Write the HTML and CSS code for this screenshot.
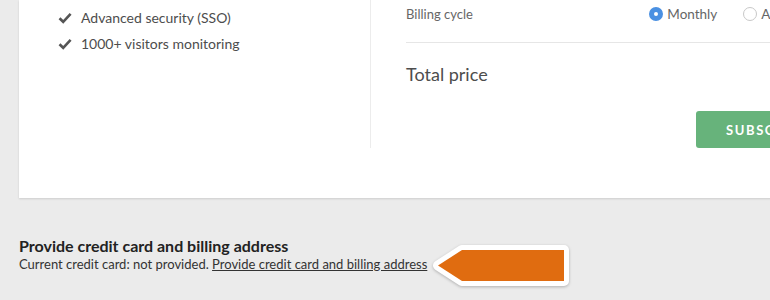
FILE: index.html
```html
<!DOCTYPE html>
<html lang="en">
<head>
    <meta charset="UTF-8">
    <meta name="viewport" content="width=device-width, initial-scale=1.0">
    <title>Subscription</title>
    <link rel="stylesheet" href="styles.css">
</head>
<body>

<div class="page">
    <div class="plan-card">
        <div class="plan-row">
            <div class="plan-features">
                <ul class="feature-list">
                    <li>
                        <svg class="check" width="14" height="12" viewBox="0 0 14 12"><path d="M1.5 6.2 L5.2 9.8 L12.6 1.8" fill="none" stroke="#555" stroke-width="2.6"/></svg>
                        Advanced security (SSO)
                    </li>
                    <li>
                        <svg class="check" width="14" height="12" viewBox="0 0 14 12"><path d="M1.5 6.2 L5.2 9.8 L12.6 1.8" fill="none" stroke="#555" stroke-width="2.6"/></svg>
                        1000+ visitors monitoring
                    </li>
                </ul>
            </div>
            <div class="plan-order">
                <div class="billing-row">
                    <span class="billing-label">Billing cycle</span>
                    <div class="radios">
                        <label class="radio"><span class="radio-dot checked"></span>Monthly</label>
                        <label class="radio"><span class="radio-dot"></span>Annually</label>
                    </div>
                </div>
                <h3 class="total">Total price</h3>
                <button class="subscribe">SUBSCRIBE</button>
            </div>
        </div>
    </div>

    <div class="billing-info">
        <h4>Provide credit card and billing address</h4>
        <p>Current credit card: not provided. <a href="#">Provide credit card and billing address</a></p>
        <!-- panah penunjuk -->
        <svg class="pointer" width="142" height="50" viewBox="0 0 142 50">
            <polygon points="8,25.5 32,10 134,10 134,41 32,41" fill="#fff" stroke="#fff" stroke-width="10" stroke-linejoin="round"/>
            <polygon points="8,25.5 32,10 134,10 134,41 32,41" fill="#e06c10"/>
        </svg>
    </div>
</div>

</body>
</html>
```

FILE: styles.css
```css
* {
    box-sizing: border-box;
}
body {
    font-family: 'Lato', 'Liberation Sans', sans-serif;
    margin: 0;
    padding: 0;
    background-color: #ebebeb;
}
.page {
    width: 770px;
    height: 300px;
    overflow: hidden;
}
.plan-card {
    width: 900px;
    margin-left: 19px;
    background-color: #fff;
    padding-bottom: 50px;
    box-shadow: 0 1px 2px rgba(0, 0, 0, 0.13);
}
.plan-row {
    display: flex;
}
.plan-features {
    width: 352px;
    border-right: 1px solid #ececec;
    padding: 5px 0 0 39px;
}
.feature-list {
    list-style: none;
    margin: 0;
    padding: 0;
}
.feature-list li {
    display: flex;
    align-items: center;
    gap: 9px;
    font-size: 14px;
    line-height: 26px;
    color: #4d4d4d;
}
.plan-order {
    width: 440px;
    margin-left: 35px;
    display: flex;
    flex-direction: column;
}
.billing-row {
    display: flex;
    align-items: center;
    height: 28px;
    padding-right: 33px;
    border-bottom: 1px solid #e6e6e6;
    box-sizing: content-box;
    padding-bottom: 14px;
}
.billing-label {
    font-size: 13px;
    color: #666;
}
.radios {
    margin-left: auto;
    display: flex;
    gap: 26px;
}
.radio {
    display: flex;
    align-items: center;
    gap: 4px;
    font-size: 13.5px;
    color: #666;
}
.radio-dot {
    width: 14px;
    height: 14px;
    border-radius: 50%;
    border: 1px solid #c8c8c8;
    background-color: #fff;
}
.radio-dot.checked {
    border: 5px solid #4a90e2;
    background-color: #fff;
}
.total {
    font-size: 18px;
    font-weight: normal;
    line-height: 24px;
    color: #4d4d4d;
    margin: 19px 0 0 0;
}
.subscribe {
    align-self: flex-end;
    margin-top: 25px;
    height: 37px;
    width: 150px;
    padding: 0 0 0 30px;
    text-align: left;
    background-color: #67b37b;
    color: #fff;
    border: none;
    border-radius: 3px;
    font-family: 'Lato', 'Liberation Sans', sans-serif;
    font-size: 13px;
    font-weight: bold;
    letter-spacing: 1.6px;
}
.billing-info {
    position: relative;
    margin: 38px 0 0 19px;
    color: #222;
}
.billing-info h4 {
    font-size: 16px;
    line-height: 20px;
    margin: 0;
    font-weight: bold;
}
.billing-info p {
    font-size: 13px;
    line-height: 16px;
    margin: 0;
    color: #333;
}
.billing-info a {
    color: #333;
}
.pointer {
    position: absolute;
    left: 411px;
    top: 4px;
    filter: drop-shadow(0 1px 1.5px rgba(0, 0, 0, 0.25));
}
```
